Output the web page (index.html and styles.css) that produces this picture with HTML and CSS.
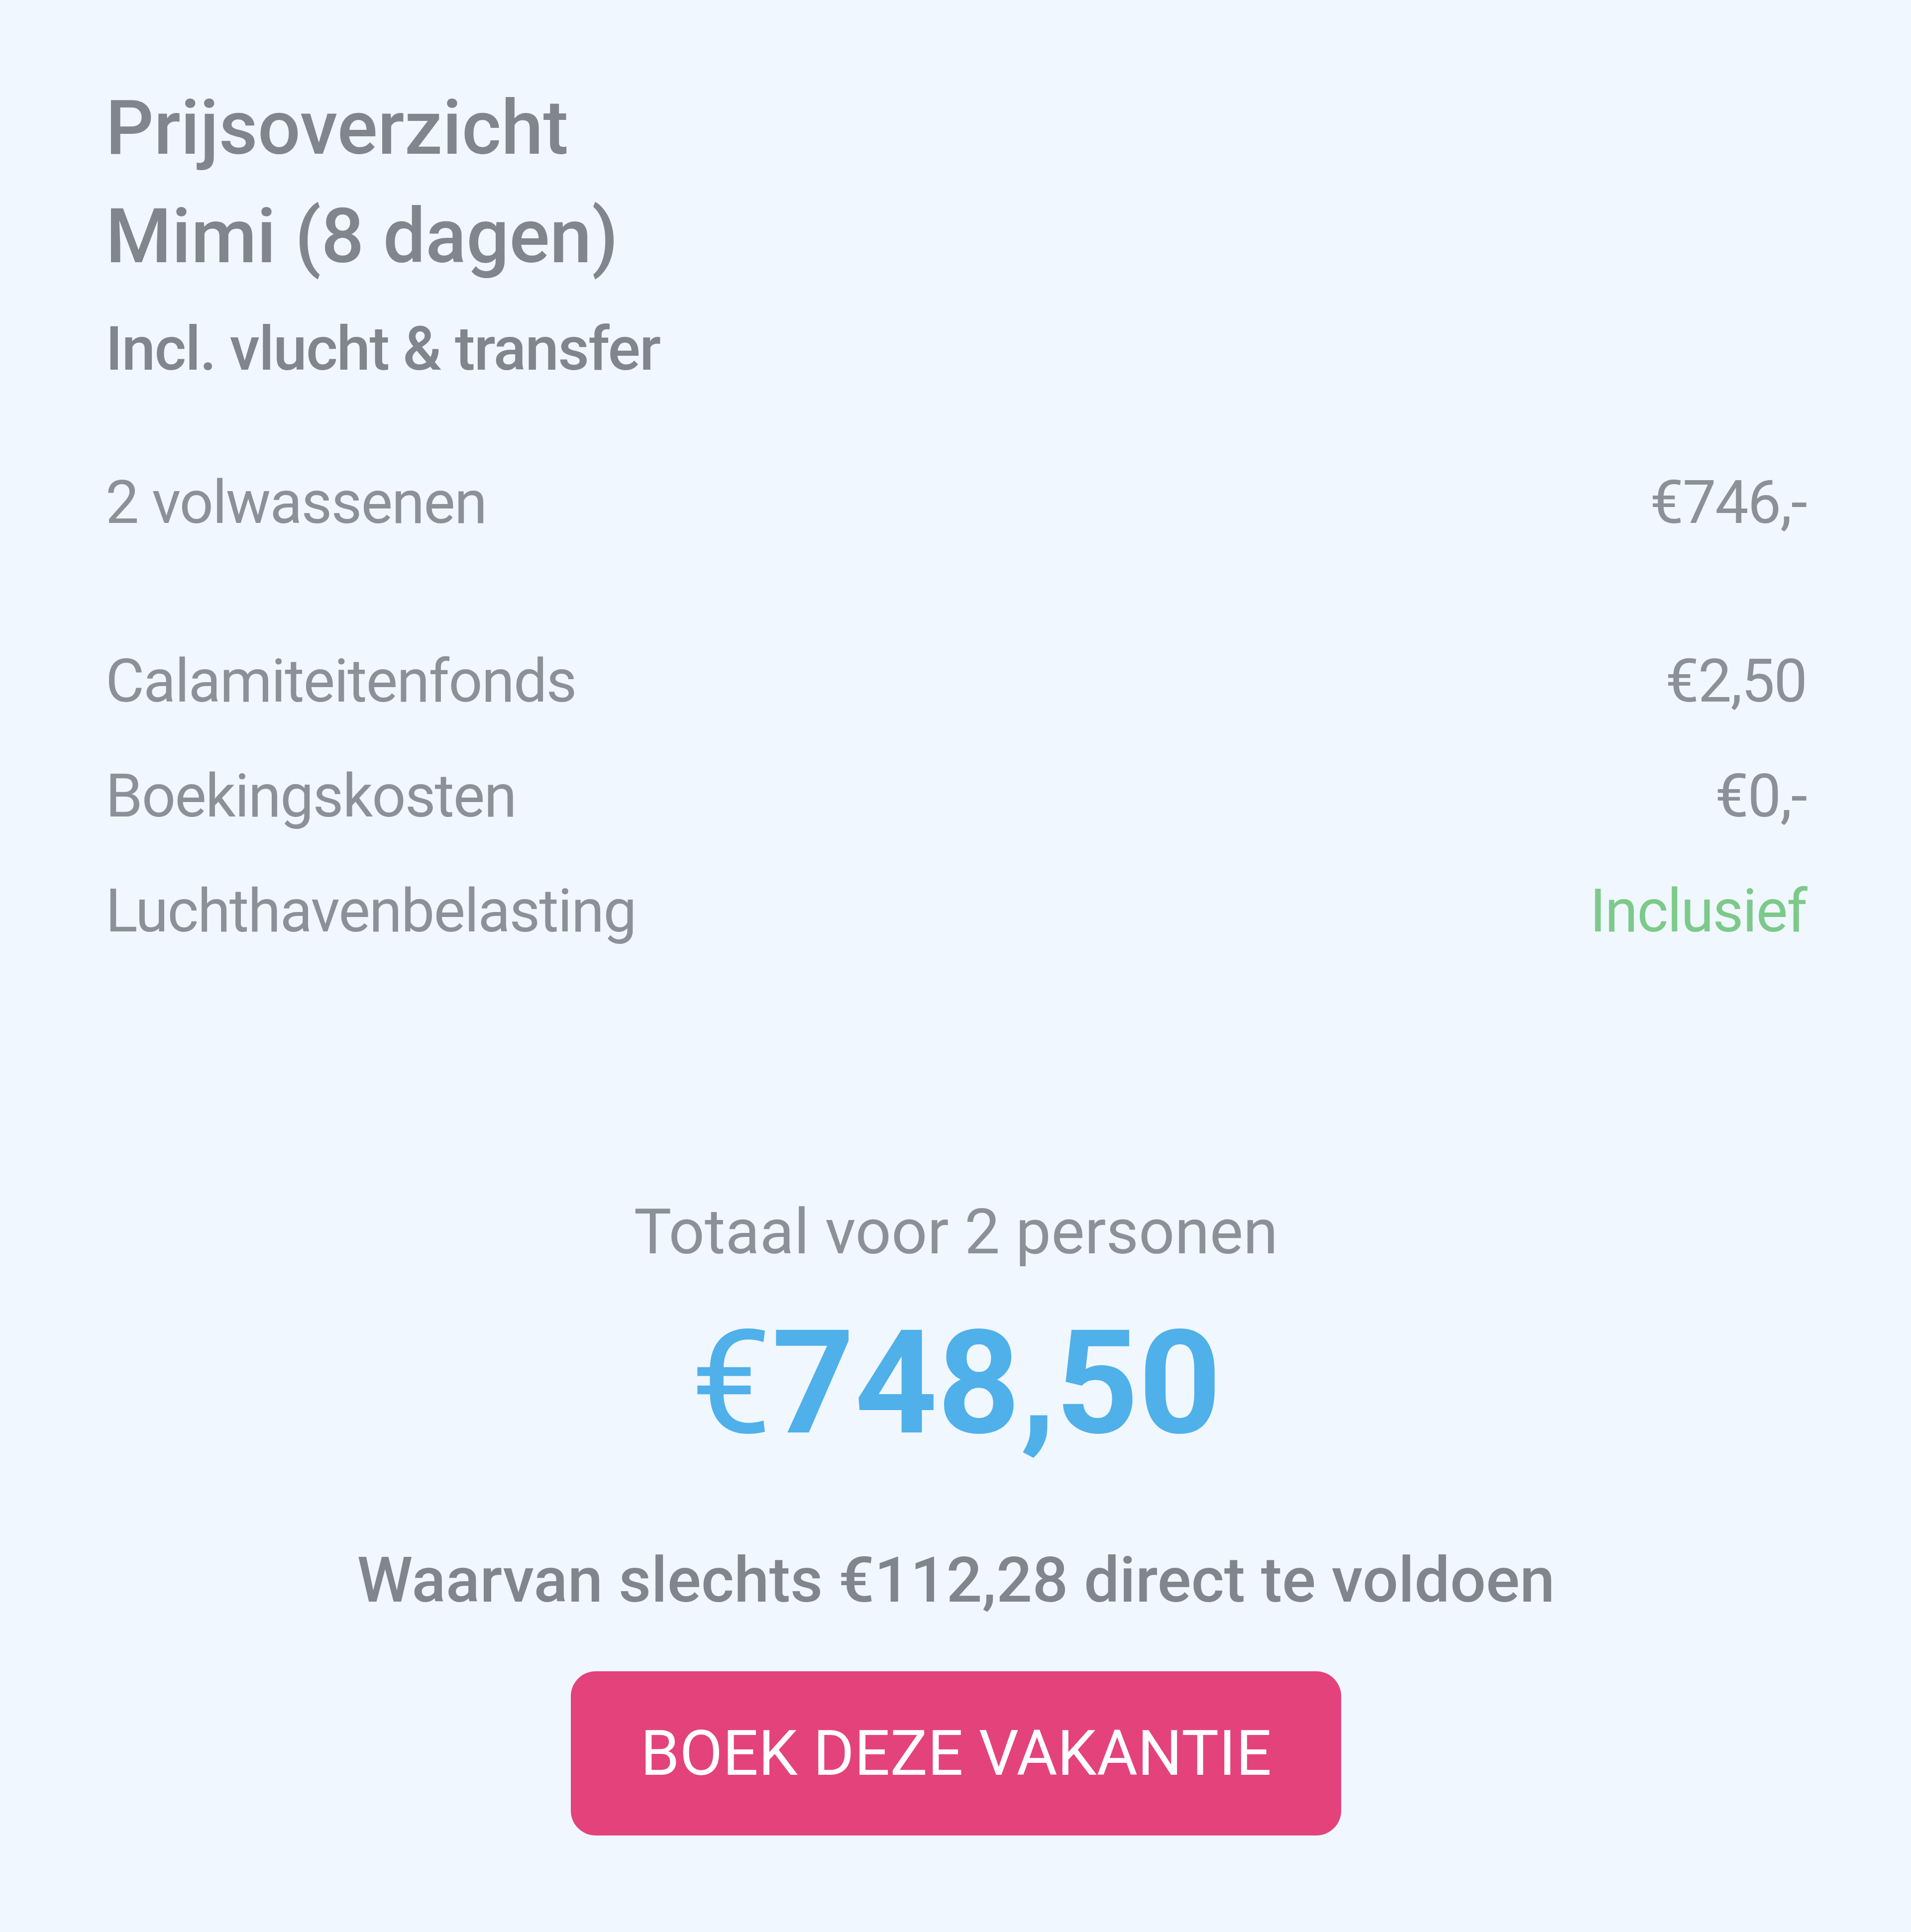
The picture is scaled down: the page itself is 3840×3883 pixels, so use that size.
FILE: index.html
```html
<!DOCTYPE html>
<html lang="nl">
<head>
    <meta charset="UTF-8">
    <meta name="viewport" content="width=device-width, initial-scale=1.0">
    <title>Prijsoverzicht</title>
    <link rel="stylesheet" href="styles.css">
</head>
<body>
    <div class="overview">
        <h1 class="title">Prijsoverzicht<br>Mimi (8 dagen)</h1>
        <p class="subtitle">Incl. vlucht &amp; transfer</p>

        <div class="row row-main">
            <span>2 volwassenen</span>
            <span>€746,-</span>
        </div>
        <div class="row row-first">
            <span>Calamiteitenfonds</span>
            <span>€2,50</span>
        </div>
        <div class="row">
            <span>Boekingskosten</span>
            <span>€0,-</span>
        </div>
        <div class="row">
            <span>Luchthavenbelasting</span>
            <span class="included">Inclusief</span>
        </div>

        <div class="total">
            <p class="total-label">Totaal voor 2 personen</p>
            <p class="total-price"><span class="currency">€</span>748,50</p>
            <p class="deposit">Waarvan slechts €112,28 direct te voldoen</p>
            <button class="btn-book" type="button">BOEK DEZE VAKANTIE</button>
        </div>
    </div>
</body>
</html>
```

FILE: styles.css
```css
body {
    margin: 0;
    background-color: #f0f7fe;
    font-family: Roboto, "Liberation Sans", Arial, sans-serif;
    color: #8c9199;
}
.overview {
    padding: 148px 210px 193px 212px;
}
.title {
    margin: 0;
    font-size: 152px;
    font-weight: 500;
    line-height: 218px;
    color: #80858e;
}
.subtitle {
    margin: 32px 0 0;
    font-size: 122px;
    font-weight: 500;
    line-height: 171px;
    color: #80858e;
    letter-spacing: -2px;
}
.row {
    display: flex;
    justify-content: space-between;
    font-size: 120px;
    line-height: 231px;
    font-weight: 400;
    letter-spacing: -2px;
}
.row-main {
    margin-top: 108px;
}
.row-first {
    margin-top: 128px;
}
.included {
    color: #7dc98a;
}
.total {
    display: flex;
    flex-direction: column;
    align-items: center;
    margin-top: 443px;
}
.total p {
    margin: 0;
}
.total-label {
    font-size: 127px;
    line-height: 171px;
}
.total-price {
    margin-top: 45px !important;
    font-size: 290px;
    font-weight: 700;
    line-height: 348px;
    color: #4fb0ea;
}
.currency {
    font-weight: 400;
}
.deposit {
    margin-top: 136px !important;
    font-size: 127px;
    font-weight: 500;
    line-height: 171px;
    color: #80858e;
}
.btn-book {
    margin-top: 98px;
    width: 1548px;
    height: 330px;
    border: none;
    border-radius: 50px;
    background-color: #e4427a;
    color: #fff;
    font-family: Roboto, "Liberation Sans", Arial, sans-serif;
    font-size: 126px;
    cursor: pointer;
}
```
